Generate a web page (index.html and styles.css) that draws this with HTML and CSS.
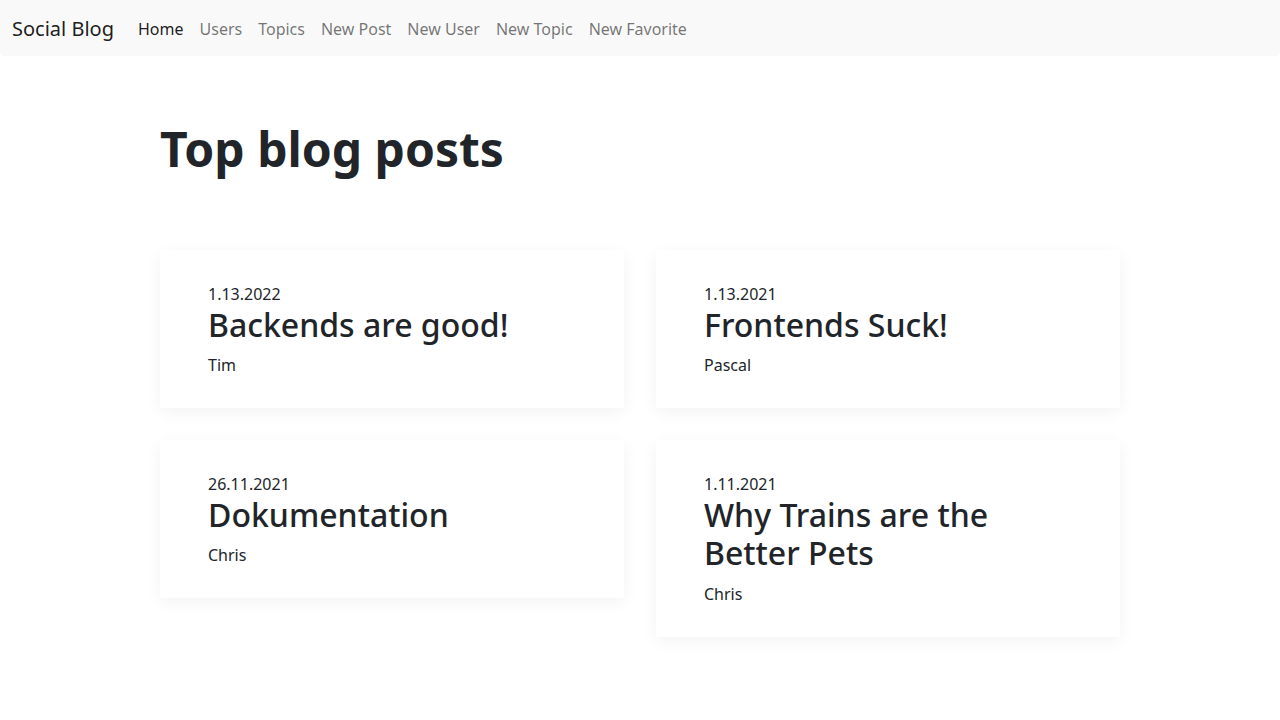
FILE: index.html
```html
<!DOCTYPE html>
<html lang="en">
<head>
<meta charset="utf-8">
<title>Social Blog</title>
<link rel="stylesheet" href="styles.css">
</head>
<body>
<nav class="navbar">
  <a class="brand" href="#">Social Blog</a>
  <ul class="nav">
    <li><a class="nav-link active" href="#">Home</a></li>
    <li><a class="nav-link" href="#">Users</a></li>
    <li><a class="nav-link" href="#">Topics</a></li>
    <li><a class="nav-link" href="#">New Post</a></li>
    <li><a class="nav-link" href="#">New User</a></li>
    <li><a class="nav-link" href="#">New Topic</a></li>
    <li><a class="nav-link" href="#">New Favorite</a></li>
  </ul>
</nav>
<main class="container">
  <h1 class="title">Top blog posts</h1>
  <div class="grid">
    <article class="card">
      <div class="date">1.13.2022</div>
      <h2 class="post-title">Backends are good!</h2>
      <div class="author">Tim</div>
    </article>
    <article class="card">
      <div class="date">1.13.2021</div>
      <h2 class="post-title">Frontends Suck!</h2>
      <div class="author">Pascal</div>
    </article>
    <article class="card">
      <div class="date">26.11.2021</div>
      <h2 class="post-title">Dokumentation</h2>
      <div class="author">Chris</div>
    </article>
    <article class="card">
      <div class="date">1.11.2021</div>
      <h2 class="post-title">Why Trains are the Better Pets</h2>
      <div class="author">Chris</div>
    </article>
  </div>
</main>
</body>
</html>
```
FILE: styles.css
```css
* { box-sizing: border-box; }
html, body { margin: 0; padding: 0; }
body {
  font-family: "Noto Sans", "Liberation Sans", sans-serif;
  font-size: 16px;
  line-height: 1.5;
  color: #212529;
  background: #fff;
}
a { text-decoration: none; }
.navbar {
  display: flex;
  align-items: center;
  height: 56px;
  padding: 9px 12px 7px;
  background: #f9f9f9;
  border-radius: 0 0 4px 4px;
}
.brand {
  font-size: 20px;
  line-height: 30px;
  padding: 5px 0;
  margin-right: 16px;
  color: rgba(0,0,0,0.9);
}
.nav {
  display: flex;
  list-style: none;
  margin: 0;
  padding: 0;
}
.nav-link {
  display: block;
  padding: 8px;
  color: rgba(0,0,0,0.55);
}
.nav-link.active { color: rgba(0,0,0,0.9); }
.container {
  width: 960px;
  margin: 0 auto;
  padding: 64px 0;
}
.title {
  font-size: 48px;
  font-weight: 700;
  line-height: 1.2;
  margin: 0 0 72px;
}
.grid {
  display: grid;
  grid-template-columns: 1fr 1fr;
  gap: 32px;
  align-items: start;
}
.card {
  background: #fff;
  padding: 33px 48px 31px;
  box-shadow: 0 4px 16px rgba(0,0,0,0.05);
}
.date { line-height: 23px; }
.post-title {
  font-size: 32px;
  font-weight: 500;
  line-height: 1.2;
  margin: 0 0 9px;
}
.author { line-height: 24px; }
```
